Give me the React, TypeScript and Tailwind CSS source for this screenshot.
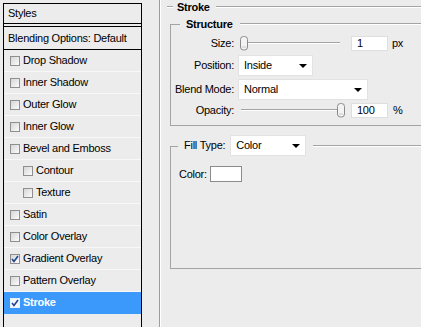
const items = [
  { label: "Drop Shadow" },
  { label: "Inner Shadow" },
  { label: "Outer Glow" },
  { label: "Inner Glow" },
  { label: "Bevel and Emboss" },
  { label: "Contour", sub: true },
  { label: "Texture", sub: true },
  { label: "Satin" },
  { label: "Color Overlay" },
  { label: "Gradient Overlay", checked: true },
  { label: "Pattern Overlay" },
  { label: "Stroke", checked: true, active: true },
];

function Checkbox({ checked, active }: { checked?: boolean; active?: boolean }) {
  return (
    <span
      className={
        "w-[10px] h-[10px] shrink-0 border flex items-center justify-center " +
        (active
          ? "border-[#e8f1fb] bg-[#f4f7fb]"
          : "border-[#8f8f8f] bg-gradient-to-br from-[#d6d6d6] to-[#fbfbfb]")
      }
    >
      {checked && (
        <svg width="8" height="8" viewBox="0 0 8 8">
          <path d="M1 4 L3 6.5 L7 1" fill="none" stroke="#21438f" strokeWidth="1.6" />
        </svg>
      )}
    </span>
  );
}

function Arrow() {
  return (
    <svg width="8" height="4" viewBox="0 0 8 4">
      <polygon points="0,0 8,0 4,4" fill="#000" />
    </svg>
  );
}

function Select({ value, width }: { value: string; width: string }) {
  return (
    <div
      className={
        "h-[21px] bg-white border border-[#e2e2e2] flex items-center justify-between pl-[5px] pr-[5px] " +
        width
      }
    >
      <span>{value}</span>
      <Arrow />
    </div>
  );
}

function Field({ value }: { value: string }) {
  return (
    <div className="h-[15px] w-[37px] bg-white border border-[#dedede] flex items-center pl-[5px]">
      {value}
    </div>
  );
}

function Slider({ pos }: { pos: "start" | "end" }) {
  return (
    <div className="relative w-[108px] h-[15px] shrink-0">
      <div className="absolute left-[3px] right-[6px] top-[6px] h-[2px] border-t border-[#a4a4a4] border-b border-b-white" />
      <svg
        width="9"
        height="15"
        viewBox="0 0 9 15"
        className={"absolute top-0 " + (pos === "start" ? "left-[2px]" : "left-[99px]")}
      >
        <rect x="0.5" y="0.5" width="7" height="13.5" rx="3" fill="#f3f3f3" stroke="#8a8a8a" />
        <line x1="2" y1="11" x2="6" y2="11" stroke="#c8c8c8" />
      </svg>
    </div>
  );
}

function Line() {
  return <div className="flex-1 h-[2px] border-t border-[#a4a4a4] border-b border-b-white" />;
}

export default function App() {
  return (
    <div className="w-[421px] h-[327px] overflow-hidden bg-[#ececec] flex text-[11px] leading-none text-black font-['Liberation_Sans',Arial,sans-serif] tracking-[-0.25px]">
      {/* left list */}
      <div className="ml-[3px] mt-[3px] w-[139px] h-[330px] shrink-0 border-t border-x border-black">
        <div className="h-[20px] flex items-center pl-[4px] border-b border-black">Styles</div>
        <div className="h-[2px]" />
        <div className="h-[24px] flex items-center pl-[4px] border-y border-black">
          Blending Options: Default
        </div>
        {items.map((it) => (
          <div
            key={it.label}
            className={
              "h-[22px] flex items-center gap-[3px] border-b " +
              (it.sub ? "pl-[19px] " : "pl-[6px] ") +
              (it.active
                ? "bg-[#3a99fb] border-[#3a99fb] text-white font-bold"
                : "border-[#f8f8f8]")
            }
          >
            <Checkbox checked={it.checked} active={it.active} />
            <span>{it.label}</span>
          </div>
        ))}
      </div>

      {/* right settings */}
      <div className="ml-[17px] w-[290px] h-full shrink-0 border-l border-[#9c9c9c]">
        <div className="h-full border-l border-white">
          <div className="h-[14px] flex items-center pl-[6px]">
            <div className="w-[6px] h-[2px] border-t border-[#a4a4a4] border-b border-b-white" />
            <span className="ml-[4px] mr-[6px] font-bold">Stroke</span>
            <Line />
          </div>

          {/* Structure */}
          <div className="ml-[9px] mt-[3px]">
            <div className="h-[14px] flex items-center">
              <div className="self-end h-[7px] w-[10px] border-l border-t border-[#a4a4a4]" />
              <span className="ml-[6px] mr-[7px] font-bold">Structure</span>
              <Line />
            </div>
            <div className="border-l border-b border-[#a4a4a4] pt-[5px] pb-[7px]">
              <div className="h-[15px] flex items-center">
                <span className="w-[63px] text-right">Size:</span>
                <span className="ml-[4px]" />
                <Slider pos="start" />
                <span className="ml-[5px]" />
                <Field value="1" />
                <span className="ml-[4px]">px</span>
              </div>
              <div className="mt-[4px] h-[21px] flex items-center">
                <span className="w-[63px] text-right">Position:</span>
                <span className="ml-[4px]" />
                <Select value="Inside" width="w-[75px]" />
              </div>
              <div className="mt-[3px] h-[21px] flex items-center">
                <span className="w-[63px] text-right">Blend Mode:</span>
                <span className="ml-[4px]" />
                <Select value="Normal" width="w-[130px]" />
              </div>
              <div className="mt-[3px] h-[15px] flex items-center">
                <span className="w-[63px] text-right">Opacity:</span>
                <span className="ml-[4px]" />
                <Slider pos="end" />
                <span className="ml-[5px]" />
                <Field value="100" />
                <span className="ml-[5px]">%</span>
              </div>
            </div>
          </div>

          {/* Fill */}
          <div className="ml-[9px] mt-[9px]">
            <div className="h-[21px] flex items-center">
              <div className="self-end h-[10px] w-[8px] border-l border-t border-[#a4a4a4]" />
              <span className="ml-[6px]">Fill Type:</span>
              <span className="ml-[5px]" />
              <Select value="Color" width="w-[76px]" />
              <span className="ml-[7px]" />
              <Line />
            </div>
            <div className="h-[113px] border-l border-b border-[#a4a4a4] pt-[10px] pl-[8px]">
              <div className="h-[16px] flex items-center">
                <span>Color:</span>
                <div className="ml-[3px] w-[32px] h-[16px] bg-white border border-[#8c8c8c]" />
              </div>
            </div>
          </div>
        </div>
      </div>
    </div>
  );
}
